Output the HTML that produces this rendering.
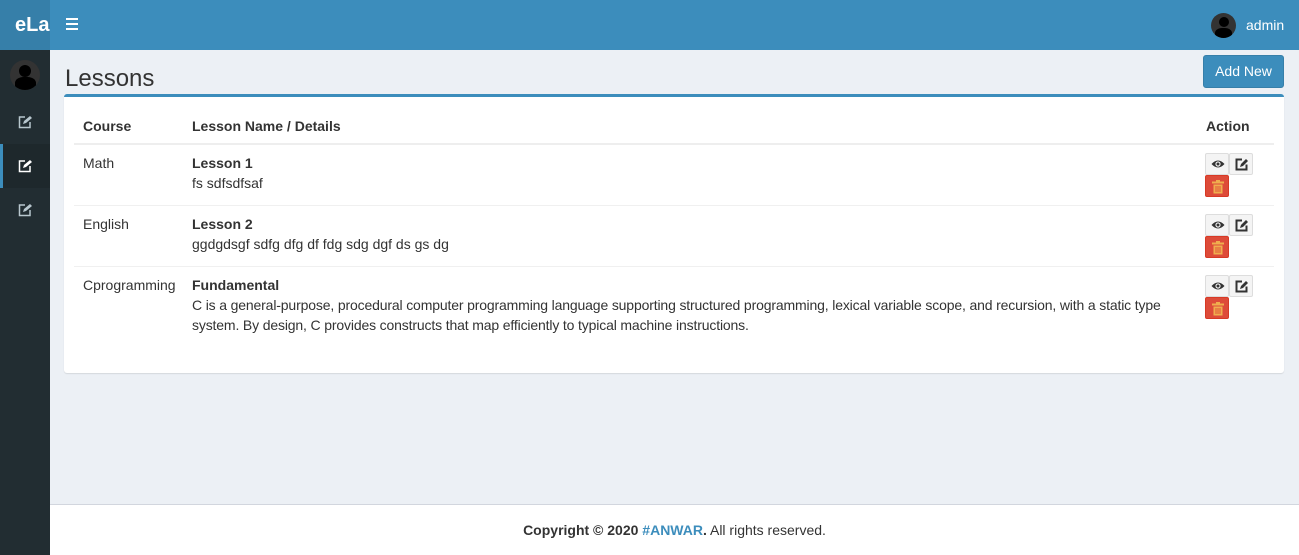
<!DOCTYPE html>
<html><head><style>
*{box-sizing:border-box;margin:0;padding:0}
body{width:1299px;height:555px;overflow:hidden;font-family:"Liberation Sans",sans-serif;font-size:14px;color:#333;background:#ecf0f5;position:relative}
.top{position:absolute;left:0;top:0;width:1299px;height:50px;background:#3c8dbc}
.logo{position:absolute;left:0;top:0;width:50px;height:50px;background:#367fa9;color:#fff;font-weight:bold;font-size:20px;line-height:50px;padding-left:15px;overflow:hidden;white-space:nowrap}
.burger{position:absolute;left:66px;top:18px;width:12px}
.burger i{display:block;height:2px;background:#fff;margin-bottom:3px}
.av{position:absolute;border-radius:50%;background:#333;overflow:hidden}
.av:after{content:"";position:absolute;left:30%;top:15%;width:40%;height:40%;border-radius:50%;background:#000}
.av:before{content:"";position:absolute;left:15%;top:58%;width:70%;height:50%;border-radius:40% 40% 0 0;background:#000}
.side{position:absolute;left:0;top:50px;width:50px;height:505px;background:#222d32}
.item{position:absolute;left:0;width:50px;height:44px}
.item.act{background:#1e282c;border-left:3px solid #3c8dbc}
.item svg{position:absolute;left:18px;top:15px}
.item.act svg{left:15px}
h1{position:absolute;left:65px;top:65px;font-size:24px;font-weight:normal;color:#333}
.add{position:absolute;left:1203px;top:55px;width:81px;height:33px;background:#3c8dbc;border:1px solid #367fa9;border-radius:3px;color:#fff;font-size:14px;text-align:center;line-height:31px}
.box{position:absolute;left:64px;top:94px;width:1220px;height:279px;background:#fff;border-top:3px solid #3c8dbc;border-radius:3px;box-shadow:0 1px 1px rgba(0,0,0,.1)}
.t{position:absolute;font-size:14px;line-height:20px}
.b{font-weight:bold}
.sep{position:absolute;left:10px;width:1200px;height:1px;background:#f0f0f0}
.sep.h{height:2px;background:#eee}
.bt{position:absolute;width:24px;height:22px;background:#f4f4f4;border:1px solid #ddd;border-radius:2px}
.bt svg{position:absolute;left:5px;top:4px}
.bt.r{background:#dd4b39;border-color:#d73925}
.foot{position:absolute;left:50px;top:504px;width:1249px;height:51px;background:#fff;border-top:1px solid #d2d6de;text-align:center;line-height:50px;font-size:14px}
.foot a{color:#3c8dbc;font-weight:bold}
</style></head><body>
<div class="top"></div>
<div class="logo">eLa</div>
<div class="burger"><i></i><i></i><i></i></div>
<div class="av" style="left:1211px;top:13px;width:25px;height:25px"></div>
<div style="position:absolute;left:1246px;top:17px;color:#fff;font-size:14px">admin</div>
<div class="side">
<div class="av" style="left:10px;top:10px;width:30px;height:30px"></div>
<div class="item" style="top:50px"><svg width="14" height="14" viewBox="0 0 14 14"><path d="M7 2H1.5v10.5H12V7" fill="none" stroke="#b8c7ce" stroke-width="1.5"/><path d="M5 9l1-3 6-5 2 2-6 5z" fill="#b8c7ce"/></svg></div>
<div class="item act" style="top:94px"><svg width="14" height="14" viewBox="0 0 14 14"><path d="M7 2H1.5v10.5H12V7" fill="none" stroke="#fff" stroke-width="1.5"/><path d="M5 9l1-3 6-5 2 2-6 5z" fill="#fff"/></svg></div>
<div class="item" style="top:138px"><svg width="14" height="14" viewBox="0 0 14 14"><path d="M7 2H1.5v10.5H12V7" fill="none" stroke="#b8c7ce" stroke-width="1.5"/><path d="M5 9l1-3 6-5 2 2-6 5z" fill="#b8c7ce"/></svg></div>
</div>
<h1>Lessons</h1>
<div class="add">Add New</div>
<div class="box">
<div class="t b" style="left:19px;top:19px">Course</div>
<div class="t b" style="left:128px;top:19px">Lesson Name / Details</div>
<div class="t b" style="left:1142px;top:19px">Action</div>
<div class="sep h" style="top:46px"></div>
<div class="t" style="left:19px;top:56px">Math</div>
<div class="t" style="left:128px;top:56px"><b>Lesson 1</b><br>fs sdfsdfsaf</div>
<div class="sep" style="top:108px"></div>
<div class="t" style="left:19px;top:117px">English</div>
<div class="t" style="left:128px;top:117px"><b>Lesson 2</b><br>ggdgdsgf sdfg dfg df fdg sdg dgf ds gs dg</div>
<div class="sep" style="top:169px"></div>
<div class="t" style="left:19px;top:178px">Cprogramming</div>
<div class="t" style="left:128px;top:178px;width:990px;letter-spacing:-0.15px"><b style="letter-spacing:0">Fundamental</b><br>C is a general-purpose, procedural computer programming language supporting structured programming, lexical variable scope, and recursion, with a static type system. By design, C provides constructs that map efficiently to typical machine instructions.</div>

<div class="bt" style="left:1141px;top:56px"><svg width="14" height="12" viewBox="0 0 14 12"><path d="M0.5 6Q7-1 13.5 6Q7 13 0.5 6z" fill="#333"/><circle cx="7" cy="6" r="2.6" fill="#f4f4f4"/><circle cx="7" cy="6" r="1.5" fill="#333"/></svg></div>
<div class="bt" style="left:1165px;top:56px"><svg width="14" height="13" viewBox="0 0 14 13"><path d="M7 1.5H1.5v10h10V6.5" fill="none" stroke="#333" stroke-width="2"/><path d="M5 9l1-3 5-5 2 2-5 5z" fill="#333"/></svg></div>
<div class="bt r" style="left:1141px;top:78px"><svg width="14" height="14" viewBox="0 0 14 14"><rect x="1" y="1.5" width="12" height="2" fill="#f0ad4e"/><rect x="5" y="0" width="4" height="2" fill="#f0ad4e"/><path d="M2.5 4.5h9v9h-9z" fill="#f0ad4e"/><path d="M5 6v6M7 6v6M9 6v6" stroke="#dd4b39" stroke-width="0.9"/></svg></div>

<div class="bt" style="left:1141px;top:117px"><svg width="14" height="12" viewBox="0 0 14 12"><path d="M0.5 6Q7-1 13.5 6Q7 13 0.5 6z" fill="#333"/><circle cx="7" cy="6" r="2.6" fill="#f4f4f4"/><circle cx="7" cy="6" r="1.5" fill="#333"/></svg></div>
<div class="bt" style="left:1165px;top:117px"><svg width="14" height="13" viewBox="0 0 14 13"><path d="M7 1.5H1.5v10h10V6.5" fill="none" stroke="#333" stroke-width="2"/><path d="M5 9l1-3 5-5 2 2-5 5z" fill="#333"/></svg></div>
<div class="bt r" style="left:1141px;top:139px"><svg width="14" height="14" viewBox="0 0 14 14"><rect x="1" y="1.5" width="12" height="2" fill="#f0ad4e"/><rect x="5" y="0" width="4" height="2" fill="#f0ad4e"/><path d="M2.5 4.5h9v9h-9z" fill="#f0ad4e"/><path d="M5 6v6M7 6v6M9 6v6" stroke="#dd4b39" stroke-width="0.9"/></svg></div>

<div class="bt" style="left:1141px;top:178px"><svg width="14" height="12" viewBox="0 0 14 12"><path d="M0.5 6Q7-1 13.5 6Q7 13 0.5 6z" fill="#333"/><circle cx="7" cy="6" r="2.6" fill="#f4f4f4"/><circle cx="7" cy="6" r="1.5" fill="#333"/></svg></div>
<div class="bt" style="left:1165px;top:178px"><svg width="14" height="13" viewBox="0 0 14 13"><path d="M7 1.5H1.5v10h10V6.5" fill="none" stroke="#333" stroke-width="2"/><path d="M5 9l1-3 5-5 2 2-5 5z" fill="#333"/></svg></div>
<div class="bt r" style="left:1141px;top:200px"><svg width="14" height="14" viewBox="0 0 14 14"><rect x="1" y="1.5" width="12" height="2" fill="#f0ad4e"/><rect x="5" y="0" width="4" height="2" fill="#f0ad4e"/><path d="M2.5 4.5h9v9h-9z" fill="#f0ad4e"/><path d="M5 6v6M7 6v6M9 6v6" stroke="#dd4b39" stroke-width="0.9"/></svg></div>
</div>
<div class="foot"><b>Copyright © 2020 <a>#ANWAR</a>.</b> All rights reserved.</div>
</body></html>
